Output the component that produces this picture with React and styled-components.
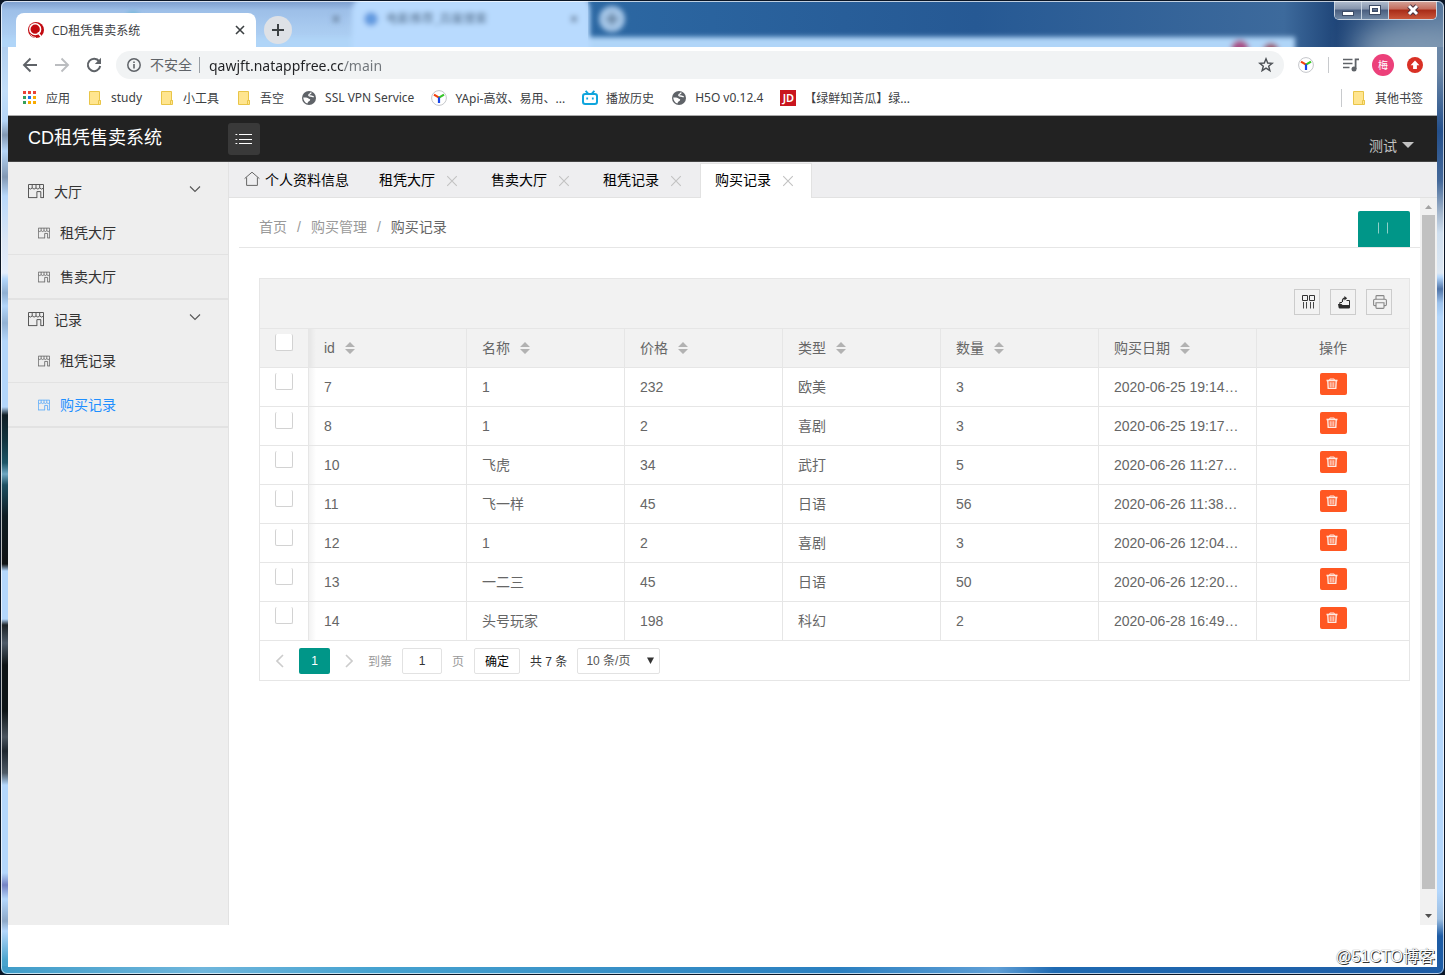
import React, { useState } from 'react';
import styled, { createGlobalStyle } from 'styled-components';

const menu = [
    { title: '大厅', items: ['租凭大厅', '售卖大厅'] },
    { title: '记录', items: ['租凭记录', '购买记录'] },
];

const pageTabs = ['租凭大厅', '售卖大厅', '租凭记录', '购买记录'];

const columns = ['id', '名称', '价格', '类型', '数量', '购买日期'];

const records = [
    { id: 7, name: '1', price: 232, type: '欧美', count: 3, date: '2020-06-25 19:14:20' },
    { id: 8, name: '1', price: 2, type: '喜剧', count: 3, date: '2020-06-25 19:17:32' },
    { id: 10, name: '飞虎', price: 34, type: '武打', count: 5, date: '2020-06-26 11:27:05' },
    { id: 11, name: '飞一样', price: 45, type: '日语', count: 56, date: '2020-06-26 11:38:40' },
    { id: 12, name: '1', price: 2, type: '喜剧', count: 3, date: '2020-06-26 12:04:28' },
    { id: 13, name: '一二三', price: 45, type: '日语', count: 50, date: '2020-06-26 12:20:06' },
    { id: 14, name: '头号玩家', price: 198, type: '科幻', count: 2, date: '2020-06-28 16:49:52' },
];

/* ---------- icons ---------- */

const LogoIcon = () => (
    <svg width="16" height="16" viewBox="0 0 16 16">
        <circle cx="8" cy="8" r="8" fill="#c20a10" />
        <circle cx="7.2" cy="7.2" r="5.4" fill="none" stroke="#fff" strokeWidth="1.5" />
        <path d="M9.8 10.6 L14 15.6" stroke="#fff" strokeWidth="1.5" />
        <path d="M2.4 12.6 A7.4 7.4 0 0 0 8 15.6" stroke="#fff" strokeWidth="0.8" fill="none" />
    </svg>
);

const CloseIcon = ({ size = 10, color = '#3c4043', width = 1.6 }) => (
    <svg width={size} height={size} viewBox="0 0 10 10">
        <path d="M1 1 L9 9 M9 1 L1 9" stroke={color} strokeWidth={width} />
    </svg>
);

const PlusIcon = () => (
    <svg width="12" height="12" viewBox="0 0 12 12">
        <path d="M6 0 V12 M0 6 H12" stroke="#3c4043" strokeWidth="2" />
    </svg>
);

const BackIcon = ({ color = '#5f6368', flip }) => (
    <svg width="16" height="16" viewBox="0 0 16 16" transform={flip ? 'scale(-1 1)' : undefined}>
        <path d="M15 8 H2.5 M8.5 1.5 L2 8 L8.5 14.5" stroke={color} strokeWidth="1.9" fill="none" />
    </svg>
);

const ReloadIcon = () => (
    <svg width="16" height="16" viewBox="0 0 16 16">
        <path d="M13.2 4.4 A6.2 6.2 0 1 0 14.2 9" stroke="#5f6368" strokeWidth="2" fill="none" />
        <path d="M15 0.8 V7 H8.8 Z" fill="#5f6368" />
    </svg>
);

const InfoIcon = () => (
    <svg width="14" height="14" viewBox="0 0 14 14">
        <circle cx="7" cy="7" r="6.2" stroke="#5f6368" strokeWidth="1.5" fill="none" />
        <path d="M7 6 V10.4 M7 3.4 V5" stroke="#5f6368" strokeWidth="1.6" />
    </svg>
);

const StarIcon = () => (
    <svg width="16" height="16" viewBox="0 0 16 16">
        <path d="M8 1.8 L9.7 6 L14.2 6.3 L10.7 9.2 L11.9 13.7 L8 11.2 L4.1 13.7 L5.3 9.2 L1.8 6.3 L6.3 6 Z" stroke="#4d5156" strokeWidth="1.4" fill="none" />
    </svg>
);

const YapiIcon = () => (
    <svg width="16" height="16" viewBox="0 0 16 16">
        <circle cx="8" cy="8" r="7.4" fill="#fff" stroke="#c4c6ca" strokeWidth="1" />
        <path d="M3 4.6 L8 7.6" stroke="#f4400f" strokeWidth="2.2" />
        <path d="M13 4.6 L8 7.6" stroke="#39c52b" strokeWidth="2.2" />
        <path d="M8 7.2 V13" stroke="#1746e8" strokeWidth="2.2" />
    </svg>
);

const PlaylistIcon = () => (
    <svg width="16" height="14" viewBox="0 0 16 14">
        <path d="M0 1.5 H9.5 M0 5.5 H9.5 M0 9.5 H6.5" stroke="#5f6368" strokeWidth="1.6" />
        <path d="M12.6 11 V1.4 H16" stroke="#5f6368" strokeWidth="1.8" fill="none" />
        <circle cx="11" cy="11" r="2.5" fill="#5f6368" />
    </svg>
);

const UpdateIcon = () => (
    <svg width="16" height="16" viewBox="0 0 16 16">
        <circle cx="8" cy="8" r="8" fill="#d93025" />
        <path d="M8 3.6 L12.4 8.2 H9.9 V12 H6.1 V8.2 H3.6 Z" fill="#fff" />
    </svg>
);

const AppsIcon = () => (
    <svg width="16" height="16" viewBox="0 0 16 16">
        {['#ea4335', '#ea4335', '#ea4335', '#34a05a', '#1a73e8', '#f9ab00', '#34a05a', '#f9ab00', '#f9ab00'].map((c, i) => (
            <rect key={i} x={1 + (i % 3) * 5} y={1 + Math.floor(i / 3) * 5} width="3" height="3" fill={c} />
        ))}
    </svg>
);

const FolderIcon = () => (
    <svg width="16" height="16" viewBox="0 0 16 16">
        <path d="M2.5 1.5 H12.5 V10.5 H13.5 V14.5 H2.5 Z" fill="#ffe58f" stroke="#e9c548" />
        <path d="M11.5 14.5 V10.5 H13.5" fill="none" stroke="#e9c548" />
    </svg>
);

const GlobeIcon = () => (
    <svg width="16" height="16" viewBox="0 0 16 16">
        <circle cx="8" cy="8" r="7" fill="#5f6368" />
        <path d="M10.2 2.6 C9.6 4.2 8.6 3.8 8 4.6 C7.4 5.8 8.4 6.2 9.6 6 C11 5.8 11.6 7 12.8 6.6" stroke="#fff" strokeWidth="1.3" fill="none" />
        <path d="M2.2 7.6 C4 7.2 6.6 7.4 7.2 8.2 C7.8 9.2 9.4 8.6 9.2 10 C8.8 11.4 7.2 11 6.8 12.4 L6.4 13.6 C4 12.8 2.4 10.6 2.2 7.6 Z" fill="#fff" />
    </svg>
);

const TvIcon = () => (
    <svg width="16" height="16" viewBox="0 0 16 16">
        <rect x="1" y="4" width="14" height="10" rx="2.2" stroke="#0fa5dd" strokeWidth="2" fill="#fff" />
        <path d="M3.6 0.8 L6 3.4 M12.4 0.8 L10 3.4" stroke="#0fa5dd" strokeWidth="1.8" />
        <path d="M5.2 7.4 V9.6 M10.8 7.4 V9.6" stroke="#0fa5dd" strokeWidth="1.8" />
    </svg>
);

const ShopIcon = ({ size = 16 }) => (
    <svg width={size} height={size} viewBox="0 0 16 16" fill="none" stroke="currentColor" strokeWidth="1" opacity="0.8">
        <path d="M0.5 15 V1.5 H15.5 V15 M0.5 14.6 H9 M13 14.6 H15.5" />
        <path d="M4.2 1.5 V5 M8 1.5 V5 M11.7 1.5 V5" />
        <path d="M0.5 5 Q2.3 7.2 4.2 5 Q6.1 7.2 8 5 Q9.9 7.2 11.7 5 Q13.6 7.2 15.5 5" />
        <path d="M8.9 15 V8.6 H12.8 V15" />
    </svg>
);

const ChevronIcon = () => (
    <svg width="12" height="12" viewBox="0 0 12 12">
        <path d="M1 3.5 L6 8.5 L11 3.5" stroke="#555" strokeWidth="1.1" fill="none" />
    </svg>
);

const HomeIcon = () => (
    <svg width="16" height="16" viewBox="0 0 16 16" fill="none" stroke="#666" strokeWidth="1">
        <path d="M0.6 7.6 L8 1.2 L15.4 7.6" />
        <path d="M2.6 6.4 V14.4 H13.4 V6.4" />
    </svg>
);

const ListIcon = () => (
    <svg width="18" height="12" viewBox="0 0 18 12">
        <path d="M4 1.5 H17 M4 6.5 H17 M4 10.5 H17" stroke="#fff" strokeWidth="1" />
        <path d="M0.5 1.5 H2.3 M0.5 6.5 H2.3 M0.5 10.5 H2.3" stroke="#fff" strokeWidth="1" />
    </svg>
);

const FilterIcon = () => (
    <svg width="14" height="14" viewBox="0 0 14 14" fill="none" stroke="#333">
        <path d="M1.5 0.5 H6.5 V5.5 H1.5 Z M8.5 0.5 H13.5 V5.5 H8.5 Z" />
        <path d="M2.5 7 V13.5 M5.5 7 V13.5 M9.5 7 V13.5 M12.5 7 V13.5" strokeWidth="0.9" />
    </svg>
);

const ExportIcon = () => (
    <svg width="14" height="14" viewBox="0 0 14 14">
        <path d="M1 9 H4.5 L5.5 10 H13 V12.4 Q13 13.5 11.8 13.5 H2.8 Q1.8 13.5 1.6 12.4 Z" fill="#2b2b2b" />
        <path d="M2.8 9 V7.5 H5 M9.5 5.5 H12.5 V10" stroke="#2b2b2b" fill="none" />
        <path d="M5.4 7 Q5.2 3.4 8 3.2" stroke="#2b2b2b" strokeWidth="1.2" fill="none" />
        <path d="M7.4 1 L10.2 3.2 L7.4 5.4 Z" fill="#2b2b2b" />
    </svg>
);

const PrintIcon = () => (
    <svg width="14" height="14" viewBox="0 0 14 14" fill="none" stroke="#888" strokeWidth="1.1">
        <path d="M3 4.2 V1.4 Q3 0.6 3.8 0.6 H10.2 Q11 0.6 11 1.4 V4.2" />
        <path d="M3 10.6 H1.8 Q0.6 10.6 0.6 9.4 V5.6 Q0.6 4.3 1.8 4.3 H12.2 Q13.4 4.3 13.4 5.6 V9.4 Q13.4 10.6 12.2 10.6 H11" />
        <path d="M3 7.8 H11 V12.6 Q11 13.4 10.2 13.4 H3.8 Q3 13.4 3 12.6 Z" />
    </svg>
);

const TrashIcon = () => (
    <svg width="12" height="12" viewBox="0 0 12 12" fill="none" stroke="#ffe9e2">
        <path d="M0.5 2.5 H11.5" strokeWidth="1.6" />
        <path d="M3.8 2.2 V1 H8.2 V2.2" />
        <path d="M1.8 3 L2.2 10.4 H9.8 L10.2 3" strokeWidth="1.4" />
        <path d="M4.2 4.2 V9.4 M6 4.2 V9.4 M7.8 4.2 V9.4" strokeWidth="1" />
    </svg>
);

const SortIcon = () => (
    <svg width="10" height="12" viewBox="0 0 10 12" fill="#b2b2b2">
        <path d="M5 0 L10 5 H0 Z M0 7 H10 L5 12 Z" />
    </svg>
);

const PagerArrow = ({ flip }) => (
    <svg width="8" height="14" viewBox="0 0 8 14">
        <path d={flip ? 'M1 1 L7 7 L1 13' : 'M7 1 L1 7 L7 13'} stroke="#ccc" strokeWidth="1.6" fill="none" />
    </svg>
);

// the window behind, seen through the glass of the title bar
const GlassBackdrop = () => (
    <Backdrop viewBox="0 0 1445 47" preserveAspectRatio="xMinYMin slice" aria-hidden="true">
        <defs>
            <filter id="soft" x="-20%" y="-50%" width="140%" height="200%"><feGaussianBlur stdDeviation="2.4" /></filter>
            <filter id="wide" x="-20%" y="-80%" width="140%" height="260%"><feGaussianBlur stdDeviation="14" /></filter>
            <linearGradient id="leftTabs" x1="0" x2="0" y1="0" y2="1">
                <stop offset="0" stopColor="#7b9dcd" />
                <stop offset="0.2" stopColor="#9dbfe8" />
                <stop offset="0.6" stopColor="#a9cbf0" />
                <stop offset="1" stopColor="#aed1f5" />
            </linearGradient>
            <linearGradient id="sky" x1="0" x2="1">
                <stop offset="0" stopColor="#2c68a3" />
                <stop offset="0.45" stopColor="#265994" />
                <stop offset="0.8" stopColor="#3d6a9c" />
                <stop offset="0.86" stopColor="#1f4578" />
                <stop offset="1" stopColor="#5d7da1" />
            </linearGradient>
        </defs>
        <rect x="580" width="880" height="47" fill="url(#sky)" />
        <ellipse cx="1415" cy="48" rx="60" ry="26" fill="#8099b2" filter="url(#wide)" />
        <rect width="588" height="47" fill="url(#leftTabs)" />
        <g filter="url(#soft)">
            <rect x="-10" y="36" width="1305" height="20" fill="#b0d5f8" />
            <path d="M352 50 V10 Q354 -4 364 -4 H580 Q590 -4 590 12 V50 Z" fill="#b8dafe" />
            <circle cx="612" cy="18" r="13" fill="#a3c4e6" />
            <path d="M612 12 V24 M606 18 H618" stroke="#64809c" strokeWidth="3" />
            <circle cx="371" cy="18" r="7" fill="#649be0" />
            <path d="M571 15 L577 21 M577 15 L571 21 M333 15 L339 21 M339 15 L333 21" stroke="#6b83a0" strokeWidth="2.4" />
            <circle cx="133" cy="17" r="7" fill="#74b8d8" />
            <circle cx="1240" cy="48" r="9" fill="#a94f87" />
            <circle cx="1271" cy="50" r="8" fill="#9c5468" />
            <text x="386" y="22" fontSize="12" fill="#3f5b7a">电影推荐_百度搜索</text>
        </g>
    </Backdrop>
);

/* ---------- page ---------- */

const TitleBar = () => (
    <TitleRow>
        <GlassBackdrop />
        <BrowserTab>
            <LogoIcon />
            <BrowserTabTitle>CD租凭售卖系统</BrowserTabTitle>
            <BareButton aria-label="关闭标签页"><CloseIcon /></BareButton>
        </BrowserTab>
        <NewTab aria-label="新标签页"><PlusIcon /></NewTab>
        <WindowButtons>
            <WindowButton aria-label="最小化">
                <svg width="12" height="12" viewBox="0 0 12 12"><rect x="0.5" y="7.5" width="11" height="4" fill="#fff" stroke="#3d4c66" /></svg>
            </WindowButton>
            <WindowButton aria-label="最大化">
                <svg width="12" height="12" viewBox="0 0 12 12">
                    <rect x="2" y="3" width="8" height="6" fill="none" stroke="#3d4c66" strokeWidth="4" />
                    <rect x="2" y="3" width="8" height="6" fill="none" stroke="#fff" strokeWidth="2" />
                </svg>
            </WindowButton>
            <WindowButton $close aria-label="关闭">
                <svg width="14" height="12" viewBox="0 0 14 12">
                    <path d="M3 2 L11 10 M11 2 L3 10" stroke="#4a3340" strokeWidth="5" />
                    <path d="M3 2 L11 10 M11 2 L3 10" stroke="#fff" strokeWidth="3" />
                </svg>
            </WindowButton>
        </WindowButtons>
    </TitleRow>
);

const Toolbar = () => {
    const [url, setUrl] = useState('qawjft.natappfree.cc/main');

    return (
        <ToolbarRow>
            <ToolButton aria-label="后退"><BackIcon /></ToolButton>
            <ToolButton aria-label="前进"><BackIcon color="#bbbdc0" flip /></ToolButton>
            <ToolButton aria-label="重新加载"><ReloadIcon /></ToolButton>
            <Omnibox>
                <InfoIcon />
                <Insecure>不安全</Insecure>
                <UrlInput aria-label="地址" value={url} onChange={e => setUrl(e.target.value)} />
                <BareButton aria-label="收藏"><StarIcon /></BareButton>
            </Omnibox>
            <ToolButton aria-label="YApi"><YapiIcon /></ToolButton>
            <ToolDivider />
            <ToolButton aria-label="播放列表"><PlaylistIcon /></ToolButton>
            <ToolButton aria-label="用户"><Avatar>梅</Avatar></ToolButton>
            <ToolButton aria-label="更新"><UpdateIcon /></ToolButton>
        </ToolbarRow>
    );
};

const Bookmarks = () => (
    <BookmarkRow>
        <Bookmark href="#"><AppsIcon />应用</Bookmark>
        <Bookmark href="#"><FolderIcon />study</Bookmark>
        <Bookmark href="#"><FolderIcon />小工具</Bookmark>
        <Bookmark href="#"><FolderIcon />吾空</Bookmark>
        <Bookmark href="#"><GlobeIcon />SSL VPN Service</Bookmark>
        <Bookmark href="#"><YapiIcon />YApi-高效、易用、...</Bookmark>
        <Bookmark href="#"><TvIcon />播放历史</Bookmark>
        <Bookmark href="#"><GlobeIcon />H5O v0.12.4</Bookmark>
        <Bookmark href="#"><JdBadge>JD</JdBadge>【绿鲜知苦瓜】绿...</Bookmark>
        <OtherBookmarks>
            <Bookmark href="#"><FolderIcon />其他书签</Bookmark>
        </OtherBookmarks>
    </BookmarkRow>
);

const Sidebar = ({ active, onSelect }) => (
    <Side>
        {menu.map(group => (
            <MenuGroup key={group.title}>
                <MenuTitle><ShopIcon /><span>{group.title}</span><Fold><ChevronIcon /></Fold></MenuTitle>
                {group.items.map(item => (
                    <MenuItem key={item} href="#" $active={item === active} onClick={() => onSelect(item)}>
                        <ShopIcon size={12} />{item}
                    </MenuItem>
                ))}
            </MenuGroup>
        ))}
    </Side>
);

const RecordTable = () => (
    <TableBox>
        <TableTools>
            <SquareButton aria-label="筛选列"><FilterIcon /></SquareButton>
            <SquareButton aria-label="导出"><ExportIcon /></SquareButton>
            <SquareButton aria-label="打印"><PrintIcon /></SquareButton>
        </TableTools>
        <Table>
            <colgroup>
                <CheckCol />
                {columns.map(c => <DataCol key={c} />)}
                <col />
            </colgroup>
            <thead>
                <tr>
                    <CheckHead><Checkbox type="checkbox" aria-label="全选" /></CheckHead>
                    {columns.map(c => (
                        <th key={c}><HeadLabel>{c}<SortIcon /></HeadLabel></th>
                    ))}
                    <ActionHead>操作</ActionHead>
                </tr>
            </thead>
            <tbody>
                {records.map(r => (
                    <tr key={r.id}>
                        <CheckCell><Checkbox type="checkbox" aria-label={`选择 ${r.id}`} /></CheckCell>
                        <td>{r.id}</td>
                        <td>{r.name}</td>
                        <td>{r.price}</td>
                        <td>{r.type}</td>
                        <td>{r.count}</td>
                        <td>{r.date}</td>
                        <ActionCell><DeleteButton aria-label="删除"><TrashIcon /></DeleteButton></ActionCell>
                    </tr>
                ))}
            </tbody>
        </Table>
        <Pager>
            <PageStep aria-label="上一页"><PagerArrow /></PageStep>
            <CurrentPage>1</CurrentPage>
            <PageStep aria-label="下一页"><PagerArrow flip /></PageStep>
            <JumpLabel>
                到第
                <PageInput defaultValue="1" />
                页
            </JumpLabel>
            <ConfirmButton>确定</ConfirmButton>
            <span>共 7 条</span>
            <SelectWrap>
                <PageSize aria-label="每页条数" defaultValue="10">
                    <option value="10">10 条/页</option>
                    <option value="20">20 条/页</option>
                </PageSize>
                <svg width="7" height="7" viewBox="0 0 7 7"><path d="M0 0.5 H7 L3.5 7 Z" fill="#333" /></svg>
            </SelectWrap>
        </Pager>
    </TableBox>
);

const App = () => {
    const [active, setActive] = useState('购买记录');

    return (
        <Window>
            <GlobalStyle />
            <TitleBar />
            <Toolbar />
            <Bookmarks />
            <Header>
                <Brand>CD租凭售卖系统</Brand>
                <MenuToggle aria-label="菜单"><ListIcon /></MenuToggle>
                <UserMenu>测试<svg width="12" height="6" viewBox="0 0 12 6"><path d="M0 0 H12 L6 6 Z" fill="#c2c2c2" /></svg></UserMenu>
            </Header>
            <Body>
                <Sidebar active={active} onSelect={setActive} />
                <Main>
                    <TabBar>
                        <PageTab><TabName><HomeIcon />个人资料信息</TabName></PageTab>
                        {pageTabs.map(t => (
                            <PageTab key={t} $active={t === active}>
                                <TabName onClick={() => setActive(t)}>{t}</TabName>
                                <TabClose aria-label={`关闭${t}`}><CloseIcon size={12} color="#c2c2c2" width={0.9} /></TabClose>
                            </PageTab>
                        ))}
                    </TabBar>
                    <Scroller>
                        <Content>
                            <CrumbBar>
                                <Crumb href="#">首页</Crumb><i>/</i>
                                <Crumb href="#">购买管理</Crumb><i>/</i>
                                <Crumb href="#" $current>购买记录</Crumb>
                                <RefreshButton aria-label="刷新">
                                    <svg width="12" height="12" viewBox="0 0 12 12"><path d="M1.5 0.5 V11.5 M10.5 0.5 V11.5" stroke="#8fd0c8" strokeWidth="1" /></svg>
                                </RefreshButton>
                            </CrumbBar>
                            <RecordTable />
                        </Content>
                        <Scrollbar>
                            <svg width="17" height="17" viewBox="0 0 17 17"><path d="M5 11 L8.5 7 L12 11 Z" fill="#a3a3a3" /></svg>
                            <Thumb />
                            <ThumbRest />
                            <svg width="17" height="17" viewBox="0 0 17 17"><path d="M5 6 H12 L8.5 10 Z" fill="#505050" /></svg>
                        </Scrollbar>
                    </Scroller>
                </Main>
            </Body>
            <Footer>@51CTO博客</Footer>
        </Window>
    );
};

export default App;


const GlobalStyle = createGlobalStyle`
    * {
        box-sizing: border-box;
    }

    body {
        margin: 0;
        background: #0b1626;
        font-family: "Liberation Sans", "Noto Sans CJK SC", sans-serif;
        font-size: 14px;
        color: #333;
    }

    button, input, select {
        margin: 0;
        padding: 0;
        border: 0;
        background: none;
        font: inherit;
        color: inherit;
    }

    a {
        color: inherit;
        text-decoration: none;
    }

    svg {
        display: block;
        flex: none;
    }
`

const Window = styled.div`
    position: relative;
    display: flex;
    flex-direction: column;
    min-height: 100vh;
    padding: 0 7px 7px;
    border: 1px solid #0b1626;
    border-radius: 7px;
    overflow: hidden;
    background:
        linear-gradient(90deg, #3f9cc8, #6fb6dc 14%, #45a2d0 26%, #3a93c8 40%, #2a7fc0 58%, #5f9fd6 69%, #1f6ab2 73%, #1d5ca5) bottom / 100% 8px no-repeat,
        linear-gradient(180deg, #9dbfe6 0, #c3def9 90px, #b5d5f7 120px, #8298b3 134px, #b5d5f7 150px, #8298b3 176px, #b8d8fa 195px, #dbe6f5 240px, #e4eefc 272px, #b3d6fa 278px, #90b0d2 292px, #b3d6fa 305px, #92b2d4 322px, #b3d6fa 340px, #b3d6fa 406px, #0f1d24 414px, #12343f 440px, #1c5567 462px, #6ea7c2 473px, #1d4f61 484px, #0f1c22 515px, #101314 563px, #b4d7fc 570px, #b4d7fc 618px, #1c2226 624px, #4d5a68 642px, #0e1416 664px, #0e1416 710px, #4a545e 736px, #1e262e 750px, #4e5a66 772px, #b4d7fc 784px, #b4d7fc 872px, #7583c4 884px, #b4d7fc 898px, #8ea9c8 920px, #b4d7fc 930px, #49a3cc 960px) left / 8px 100% no-repeat,
        linear-gradient(180deg, #6d8bab 0, #6a86a6 70px, #24508c 130px, #44699a 180px, #a3b6cc 212px, #cfdfef 232px, #dde8f3 272px, #b4d7fc 276px, #4f74a8 288px, #9cc2ec 302px, #b4d7fc 316px, #b4d7fc 890px, #9bbde0 918px, #1d5ca5 935px, #1d5ca5) right / 8px 100% no-repeat;

    /* inner light line of the glass frame */
    &::after {
        content: "";
        position: absolute;
        inset: 0;
        border: 1px solid rgba(255, 255, 255, 0.7);
        border-radius: 6px;
        pointer-events: none;
    }
`

const Backdrop = styled.svg`
    position: absolute;
    top: 0;
    left: -8px;
    width: calc(100% + 16px);
    height: 46px;
    z-index: -1;
`

const TitleRow = styled.div`
    position: relative;
    z-index: 0;
    display: flex;
    align-items: flex-end;
    height: 46px;
    padding-left: 8px;
    font-family: "Open Sans", "Noto Sans CJK SC", sans-serif;
    font-size: 12px;
`

const BrowserTab = styled.div`
    display: flex;
    align-items: center;
    gap: 8px;
    width: 240px;
    height: 34px;
    padding: 0 11px 0 12px;
    border-radius: 8px 8px 0 0;
    background: #fff;
`

const BrowserTabTitle = styled.span`
    flex: 1;
    color: #3c4043;
`

const BareButton = styled.button`
    display: flex;
`

const NewTab = styled.button`
    display: flex;
    align-items: center;
    justify-content: center;
    width: 28px;
    height: 28px;
    margin: 0 0 3px 8px;
    border-radius: 50%;
    background: #dee1e6;
`

const WindowButtons = styled.div`
    display: flex;
    align-self: flex-start;
    margin-left: auto;
    border: 1px solid #c8d3e0;
    border-top: 0;
    border-radius: 0 0 5px 5px;
    overflow: hidden;
`

const WindowButton = styled.button`
    display: flex;
    align-items: center;
    justify-content: center;
    width: ${props => props.$close ? '47px' : '27px'};
    height: 18px;
    border-right: ${props => props.$close ? '0' : '1px solid #c8d3e0'};
    background: ${props => props.$close
        ? 'linear-gradient(#d4a59b, #c46c5c 45%, #a82b17 50%, #c9563a)'
        : 'linear-gradient(#b3bfd0, #8593ab 45%, #495d7e 50%, #7289a5)'};
`

const ToolbarRow = styled.div`
    display: flex;
    align-items: center;
    height: 36px;
    padding: 0 6px;
    background: #fff;
    font-family: "Noto Sans", "Noto Sans CJK SC", sans-serif;
`

const ToolButton = styled.button`
    display: flex;
    align-items: center;
    justify-content: center;
    width: 32px;
    height: 32px;
`

const ToolDivider = styled.span`
    width: 1px;
    height: 16px;
    margin: 0 6px;
    background: #c8cacd;
`

const Omnibox = styled.div`
    display: flex;
    align-items: center;
    flex: 1;
    height: 28px;
    margin: 0 6px;
    padding: 0 10px 0 11px;
    border-radius: 14px;
    background: #f1f3f4;
`

const Insecure = styled.span`
    margin: 0 9px;
    padding-right: 7px;
    border-right: 1px solid #9aa0a6;
    line-height: 16px;
    color: #5f6368;
`

/* host is dark, the path after it grey */
const UrlInput = styled.input`
    flex: 1;
    min-width: 0;
    height: 24px;
    outline: 0;
    color: transparent;
    caret-color: #202124;
    background: linear-gradient(90deg, #202124 135px, #70757a 135px);
    background-clip: text;
`

const Avatar = styled.span`
    width: 22px;
    height: 22px;
    border-radius: 50%;
    background: #ec407a;
    color: #fff;
    font-size: 10px;
    line-height: 22px;
    text-align: center;
`

const BookmarkRow = styled.nav`
    display: flex;
    align-items: center;
    gap: 17px;
    height: 33px;
    padding: 0 14px 3px;
    border-bottom: 1px solid #aaa;
    background: #fff;
    font-family: "Noto Sans", "Noto Sans CJK SC", sans-serif;
    font-size: 12px;
    color: #3c4043;
`

const Bookmark = styled.a`
    display: flex;
    align-items: center;
    gap: 8px;
    white-space: nowrap;
`

const JdBadge = styled.span`
    width: 16px;
    height: 16px;
    background: #c9151e;
    color: #fff;
    font-size: 11px;
    font-weight: 600;
    line-height: 16px;
    text-align: center;
`

const OtherBookmarks = styled.div`
    margin-left: auto;
    padding-left: 9px;
    border-left: 1px solid #c8cacd;
`

const Header = styled.header`
    display: flex;
    height: 46px;
    border-bottom: 1px solid #444;
    background: #222;
`

const Brand = styled.h1`
    width: 220px;
    margin: 0;
    padding-left: 20px;
    color: #fff;
    font-size: 18px;
    font-weight: normal;
    line-height: 44px;
`

const MenuToggle = styled.button`
    display: flex;
    align-items: center;
    justify-content: center;
    width: 32px;
    height: 32px;
    margin-top: 7px;
    border-radius: 3px;
    background: #393939;
`

const UserMenu = styled.button`
    display: flex;
    align-items: center;
    gap: 5px;
    margin: 12px 23px 0 auto;
    color: #c2c2c2;
`

const Body = styled.div`
    display: flex;
    flex: 1;
    background: #fff;
`

const Side = styled.nav`
    width: 221px;
    flex: none;
    padding-top: 10px;
    border-right: 1px solid #e2e2e2;
    background: #eee;
`

const MenuGroup = styled.div`
    border-bottom: 1px solid #e2e2e2;
`

const MenuTitle = styled.div`
    display: flex;
    align-items: center;
    gap: 10px;
    height: 39px;
    padding: 0 27px 2px 20px;

    span {
        flex: 1;
    }
`

const Fold = styled.div`
    padding-bottom: 4px;
`

const MenuItem = styled.a`
    display: flex;
    align-items: center;
    gap: 10px;
    height: 44px;
    padding: 0 0 2px 30px;
    border-bottom: 1px solid #e2e2e2;
    color: ${props => props.$active ? '#1e8fff' : '#333'};

    svg {
        margin-top: 2px;
    }
`

const Main = styled.main`
    display: flex;
    flex-direction: column;
    flex: 1;
    min-width: 0;
`

const TabBar = styled.div`
    display: flex;
    align-items: flex-end;
    height: 36px;
    border-bottom: 1px solid #e2e2e2;
    background: #eeeef0;
`

const PageTab = styled.div`
    display: flex;
    align-items: center;
    height: 35px;
    padding: 0 14px;
    border: 1px solid ${props => props.$active ? '#e2e2e2' : 'transparent'};
    border-bottom: 0;
    margin-bottom: -1px;
    background: ${props => props.$active ? '#fff' : 'none'};
    color: #000;
`

const TabName = styled.button`
    display: flex;
    align-items: center;
    gap: 5px;
    padding-bottom: 4px;
    white-space: nowrap;
`

const TabClose = styled.button`
    display: flex;
    margin: 0 3px 0 11px;
`

const Scroller = styled.div`
    display: flex;
    flex: 1;
`

const Content = styled.div`
    flex: 1;
    min-width: 0;
    padding: 10px 0 0 10px;
`

const CrumbBar = styled.div`
    display: flex;
    align-items: flex-start;
    height: 40px;
    padding: 0 10px 0 20px;
    border-bottom: 1px solid #e6e6e6;
    line-height: 38px;
    color: #999;

    i {
        margin: 0 10px;
        font-style: normal;
    }
`

const Crumb = styled.a`
    color: ${props => props.$current ? '#666' : '#999'};
`

const RefreshButton = styled.button`
    display: flex;
    justify-content: center;
    align-self: flex-end;
    width: 52px;
    height: 36px;
    margin-left: auto;
    padding: 11px 3px 0 0;
    border-radius: 2px 2px 0 0;
    background: #009688;
`

const TableBox = styled.section`
    margin: 30px 10px 20px 20px;
    border: 1px solid #e6e6e6;
    color: #666;
`

const TableTools = styled.div`
    display: flex;
    justify-content: flex-end;
    gap: 10px;
    height: 50px;
    padding: 10px 17px 0;
    border-bottom: 1px solid #e6e6e6;
    background: #f2f2f2;
`

const SquareButton = styled.button`
    display: flex;
    align-items: center;
    justify-content: center;
    width: 26px;
    height: 26px;
    padding-left: 2px;
    border: 1px solid #ccc;
`

const Table = styled.table`
    width: 100%;
    table-layout: fixed;
    border-collapse: separate;
    border-spacing: 0;

    th, td {
        height: 39px;
        padding: 0 15px;
        border-right: 1px solid #e6e6e6;
        border-bottom: 1px solid #e6e6e6;
        font-weight: normal;
        line-height: 28px;
        text-align: left;
        white-space: nowrap;
        overflow: hidden;
        text-overflow: ellipsis;
    }

    th {
        background-color: #f2f2f2;
    }

    th:last-child, td:last-child {
        border-right: 0;
    }

    th:nth-child(2), td:nth-child(2) {
        background-image: linear-gradient(90deg, rgba(0, 0, 0, 0.05), transparent 7px);
    }
`

const CheckCol = styled.col`
    width: 49px;
`

const DataCol = styled.col`
    width: 158px;
`

const CheckHead = styled.th`
    vertical-align: top;
`

const CheckCell = styled.td`
    vertical-align: top;
`

const Checkbox = styled.input`
    display: block;
    appearance: none;
    width: 18px;
    height: 17px;
    margin-top: 5px;
    border: 1px solid #d2d2d2;
    border-top: 0;
    border-radius: 2px;
    background: #fff;
`

const HeadLabel = styled.span`
    display: flex;
    align-items: center;
    gap: 10px;
`

const ActionHead = styled.th`
    && {
        text-align: center;
    }
`

const ActionCell = styled.td`
    vertical-align: top;
`

const DeleteButton = styled.button`
    display: flex;
    justify-content: center;
    width: 27px;
    height: 22px;
    margin: 5px auto 0;
    padding: 5px 3px 0 0;
    border-radius: 2px;
    background: #ff5722;
`

const Pager = styled.div`
    display: flex;
    align-items: center;
    gap: 10px;
    height: 39px;
    padding: 0 7px;
    font-size: 12px;
    color: #333;
`

const PageStep = styled.button`
    display: flex;
    justify-content: center;
    width: 26px;
    margin-right: -4px;

    &:nth-child(3) {
        margin: 0 -4px 0 -4px;
    }
`

const CurrentPage = styled.button`
    width: 31px;
    height: 26px;
    border-radius: 2px;
    background: #009688;
    color: #fff;
`

const JumpLabel = styled.label`
    display: flex;
    align-items: center;
    gap: 10px;
    color: #999;
`

const PageInput = styled.input`
    width: 40px;
    height: 26px;
    border: 1px solid #e2e2e2;
    border-radius: 2px;
    color: #333;
    text-align: center;
`

const ConfirmButton = styled.button`
    width: 46px;
    height: 26px;
    border: 1px solid #e2e2e2;
    border-radius: 2px;
    color: #000;
`

const SelectWrap = styled.span`
    display: grid;
    align-items: center;

    svg {
        grid-area: 1 / 1;
        justify-self: end;
        margin-right: 6px;
        pointer-events: none;
    }
`

const PageSize = styled.select`
    grid-area: 1 / 1;
    appearance: none;
    width: 83px;
    height: 26px;
    padding-left: 8px;
    border: 1px solid #e2e2e2;
    border-radius: 2px;
    color: #555;
`

const Scrollbar = styled.div`
    display: flex;
    flex-direction: column;
    width: 17px;
    background: #f1f1f1;
`

const Thumb = styled.div`
    flex: 674;
    margin: 0 2px;
    background: #c1c1c1;
`

const ThumbRest = styled.div`
    flex: 19;
`

const Footer = styled.footer`
    height: 42px;
    padding: 20px 2px 0;
    background: #fff;
    color: #fff;
    font-size: 16px;
    line-height: 24px;
    text-align: right;
    text-shadow: 1px 1px 0 #333, 0 0 1px #555;
`
